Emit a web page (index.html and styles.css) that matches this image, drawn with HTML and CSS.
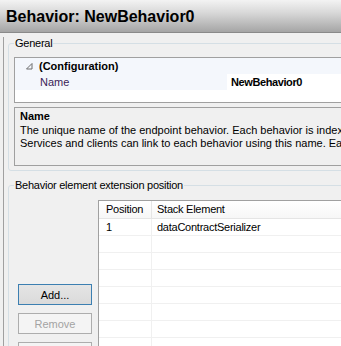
FILE: index.html
```html
<!DOCTYPE html>
<html lang="en">
<head>
    <meta charset="UTF-8">
    <title>Behavior: NewBehavior0</title>
    <link rel="stylesheet" href="styles.css">
</head>
<body>
    <!-- Title bar -->
    <div class="header">Behavior: NewBehavior0</div>

    <div class="panel">
        <!-- General group -->
        <fieldset class="group group-general">
            <legend>General</legend>
            <div class="prop-grid">
                <div class="prop-row">
                    <span class="glyph">
                        <svg width="7" height="7" viewBox="0 0 7 7"><polygon points="6,0.5 6,6 0.5,6" fill="none" stroke="#6d6d6d" stroke-width="1"/></svg>
                    </span>
                    <span class="category">(Configuration)</span>
                </div>
                <div class="prop-row">
                    <span class="glyph"></span>
                    <span class="prop-name">Name</span>
                    <span class="prop-value">NewBehavior0</span>
                </div>
            </div>
            <div class="desc-box">
                <div class="desc-title">Name</div>
                <div>The unique name of the endpoint behavior. Each behavior is indexed by this name.</div>
                <div>Services and clients can link to each behavior using this name. Each name must be unique.</div>
            </div>
        </fieldset>

        <!-- Extension position group -->
        <fieldset class="group group-position">
            <legend>Behavior element extension position</legend>
            <div class="position-body">
                <div class="buttons">
                    <button class="btn btn-default">Add...</button>
                    <button class="btn" disabled>Remove</button>
                    <button class="btn" disabled></button>
                </div>
                <div class="stack-table">
                    <div class="row head">
                        <div class="cell col-pos">Position</div>
                        <div class="cell col-el">Stack Element</div>
                    </div>
                    <div class="row">
                        <div class="cell col-pos">1</div>
                        <div class="cell col-el">dataContractSerializer</div>
                    </div>
                    <div class="row"><div class="cell col-pos"></div><div class="cell col-el"></div></div>
                    <div class="row"><div class="cell col-pos"></div><div class="cell col-el"></div></div>
                    <div class="row"><div class="cell col-pos"></div><div class="cell col-el"></div></div>
                    <div class="row"><div class="cell col-pos"></div><div class="cell col-el"></div></div>
                    <div class="row"><div class="cell col-pos"></div><div class="cell col-el"></div></div>
                    <div class="row"><div class="cell col-pos"></div><div class="cell col-el"></div></div>
                    <div class="row"><div class="cell col-pos"></div><div class="cell col-el"></div></div>
                </div>
            </div>
        </fieldset>
    </div>
</body>
</html>
```

FILE: styles.css
```css
body {
    margin: 0;
    padding: 0;
    width: 341px;
    height: 346px;
    overflow: hidden;
    background: #f0f0f0;
    font-family: "Liberation Sans", Arial, sans-serif;
    font-size: 11px;
    color: #000;
}
.header {
    height: 32px;
    line-height: 34px;
    padding-left: 6px;
    border-bottom: 1px solid #8a8a8a;
    background: linear-gradient(#f3f3f3, #d8d8d8 40%, #a5a5a5);
    font-size: 16px;
    font-weight: bold;
    white-space: nowrap;
}
.panel {
    margin-left: 3px;
    border-left: 1px solid #a0a0a0;
    width: 440px;
    height: 320px;
}
.group {
    margin: 4px 0 0 4px;
    padding: 0 0 4px 5px;
    border: 1px solid #d5dfe5;
    border-radius: 3px;
    min-width: 0;
}
.group legend {
    padding: 0 1px;
    line-height: 13px;
    letter-spacing: -0.25px;
}
.group-position {
    margin-top: 8px;
}
.prop-grid {
    margin-top: 7px;
    border: 1px solid #a0a0a0;
    background: #fff;
    height: 44px;
}
.prop-row {
    display: flex;
    align-items: center;
    height: 16px;
    background: #f4f7fc;
}
.glyph {
    width: 20px;
    display: flex;
    justify-content: center;
    padding-left: 4px;
}
.category {
    font-weight: bold;
}
.prop-name {
    width: 187px;
    padding-left: 1px;
    color: #3a1d58;
}
.prop-value {
    align-self: stretch;
    flex: 1;
    background: #fff;
    padding-left: 4px;
    font-weight: bold;
    line-height: 16px;
    letter-spacing: -0.4px;
}
.desc-box {
    margin-top: 4px;
    height: 55px;
    padding: 2px 0 0 5px;
    border: 1px solid #a0a0a0;
    line-height: 13.5px;
    white-space: nowrap;
}
.desc-title {
    font-weight: bold;
}
.position-body {
    display: flex;
    margin-top: 8px;
}
.buttons {
    display: flex;
    flex-direction: column;
    gap: 8px;
    width: 74px;
    padding: 84px 0 0 4px;
    margin-right: 6px;
}
.btn {
    height: 21px;
    padding: 0;
    border: 1px solid #adadad;
    border-radius: 0;
    background: #f4f4f4;
    font-family: inherit;
    font-size: 11px;
    color: #a3a3a3;
}
.btn-default {
    border-color: #3c7fb1;
    background: linear-gradient(#e5e5e5, #dadada);
    color: #000;
}
.stack-table {
    flex: 1;
    border-left: 1px solid #a0a0a0;
    border-top: 1px solid #a0a0a0;
    background: #fff;
    letter-spacing: -0.25px;
}
.row {
    display: flex;
    height: 16px;
    border-bottom: 1px solid #f0f0f0;
}
.cell {
    line-height: 16px;
    white-space: nowrap;
}
.col-pos {
    width: 45px;
    padding-left: 7px;
    border-right: 1px solid #f0f0f0;
}
.col-el {
    flex: 1;
    padding-left: 5px;
}
.row.head {
    height: 17px;
    background: linear-gradient(#ffffff, #f7f7f7);
    border-bottom: 1px solid #e5e5e5;
}
.row.head .cell {
    line-height: 17px;
}
.row.head .col-pos {
    border-right-color: #e5e5e5;
}
```
